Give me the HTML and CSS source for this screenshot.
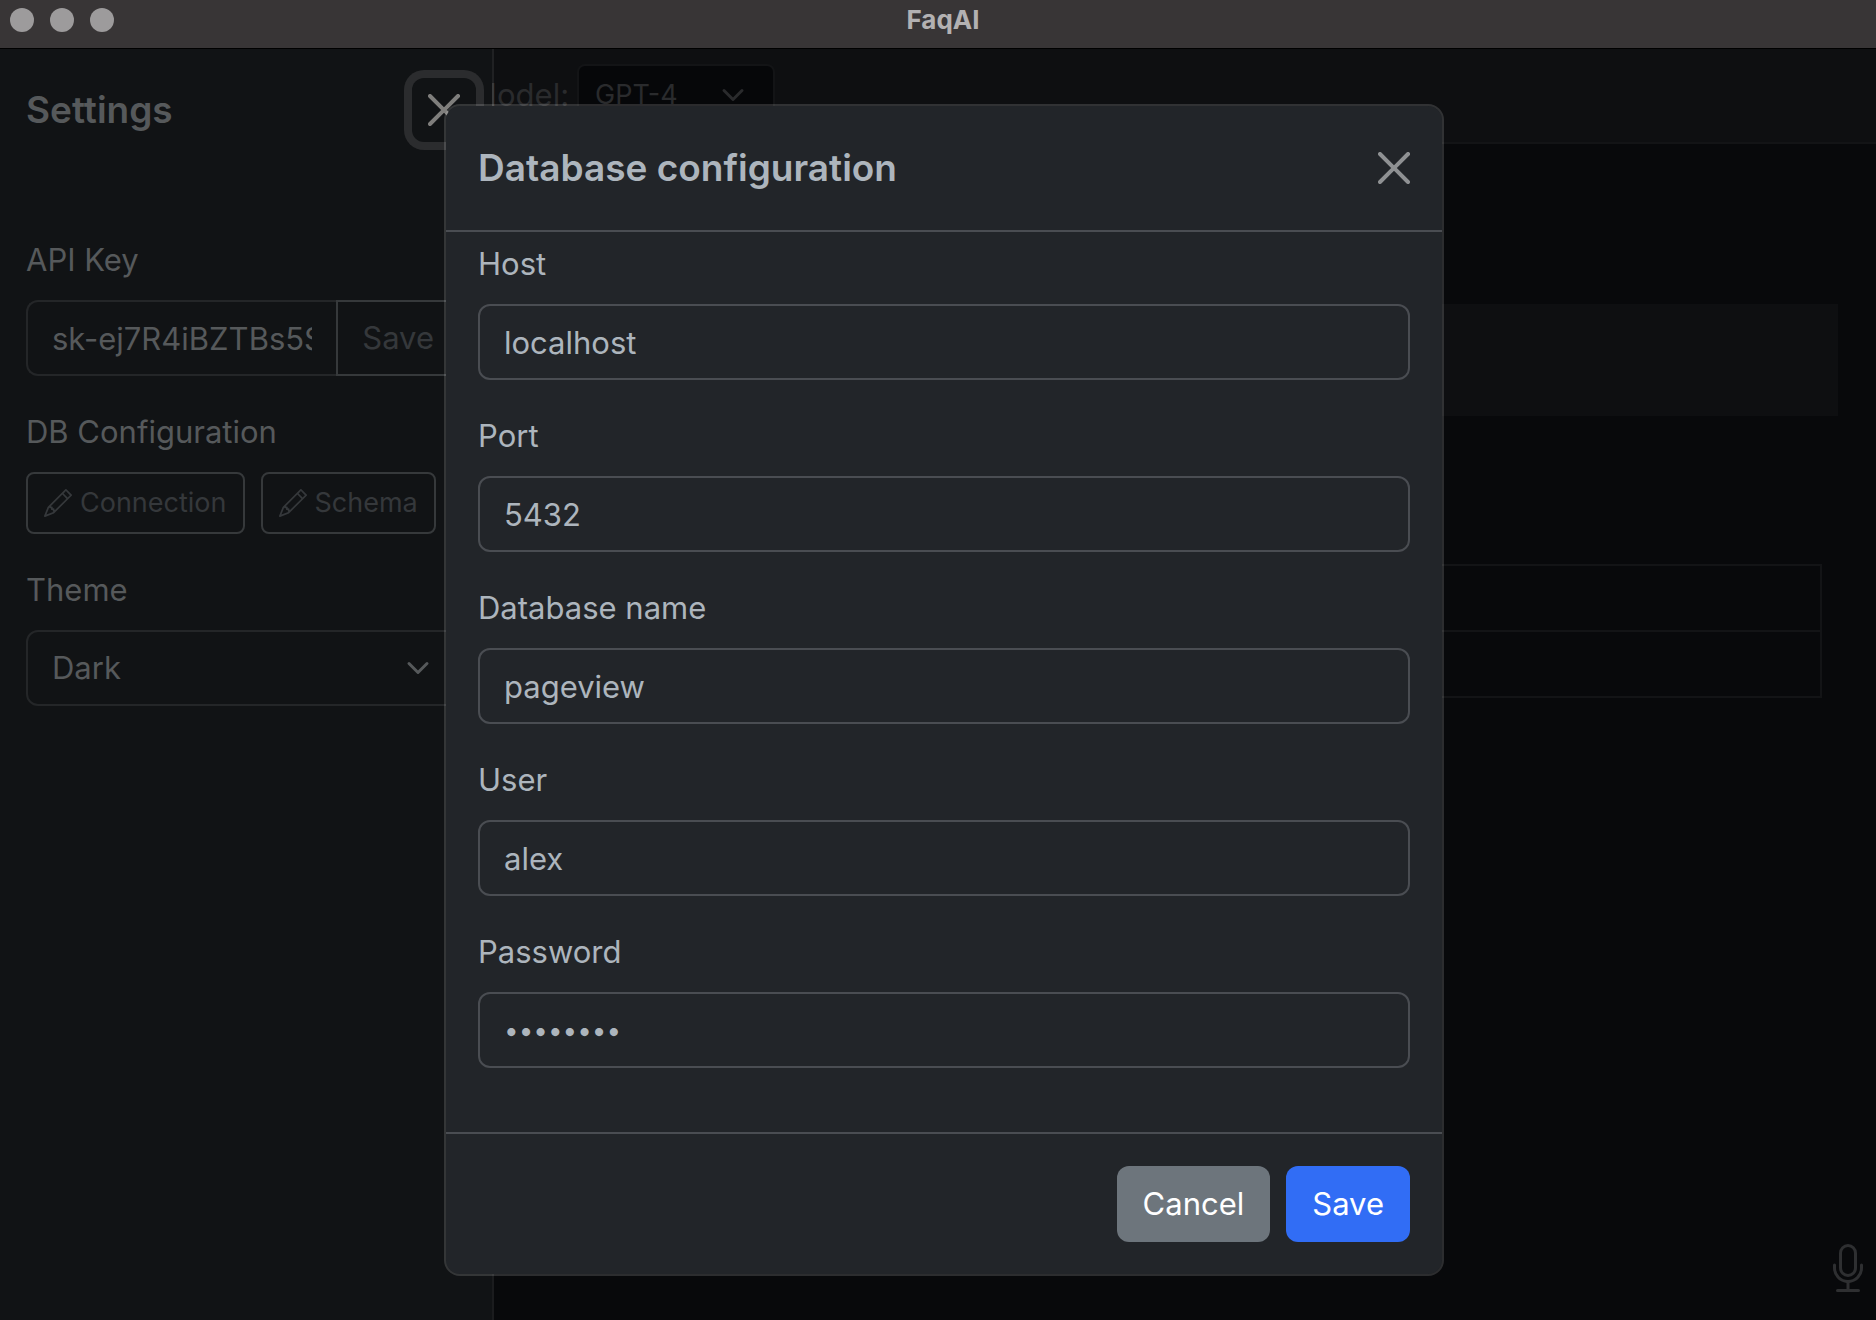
FILE: index.html
```html
<!DOCTYPE html>
<html lang="en">
<head>
<meta charset="utf-8">
<meta name="viewport" content="width=device-width, initial-scale=1">
<title>FaqAI</title>
<link rel="stylesheet" href="styles.css">
</head>
<body>
<header class="titlebar">
  <div class="lights"><span class="light"></span><span class="light"></span><span class="light"></span></div>
  <div class="app-name">FaqAI</div>
</header>

<div class="app">
  <main class="main">
    <nav class="navbar">
      <label class="model-label" for="model">Model:</label>
      <div class="select-wrap">
        <select class="select select-sm" id="model"><option>GPT-4</option></select>
        <svg class="chevron" viewBox="0 0 16 16"><path d="m2 5 6 6 6-6"/></svg>
      </div>
    </nav>
    <section class="chat">
      <div class="message"></div>
      <table class="results">
        <tbody><tr><td></td></tr><tr><td></td></tr></tbody>
      </table>
    </section>
    <button class="mic" type="button" aria-label="Record">
      <svg viewBox="0 0 16 16" width="48" height="48" fill="currentColor"><path d="M3.500 6.500A.5.5 0 0 1 4 7v1a4 4 0 0 0 8 0V7a.5.5 0 0 1 1 0v1a5 5 0 0 1-4.500 4.975V15h3a.5.5 0 0 1 0 1h-7a.5.5 0 0 1 0-1h3v-2.025A5 5 0 0 1 3 8V7a.5.5 0 0 1 .5-.5z"/><path d="M10 8a2 2 0 1 1-4 0V3a2 2 0 1 1 4 0v5zM8 0a3 3 0 0 0-3 3v5a3 3 0 0 0 6 0V3a3 3 0 0 0-3-3z"/></svg>
    </button>
  </main>

  <aside class="sidebar">
    <div class="sidebar-header">
      <h2 class="heading">Settings</h2>
      <button class="close close-focused" type="button" aria-label="Close settings">
        <svg viewBox="0 0 16 16" width="32" height="32" fill="currentColor"><path d="M.293.293a1 1 0 0 1 1.414 0L8 6.586 14.293.293a1 1 0 1 1 1.414 1.414L9.414 8l6.293 6.293a1 1 0 0 1-1.414 1.414L8 9.414l-6.293 6.293a1 1 0 0 1-1.414-1.414L6.586 8 .293 1.707a1 1 0 0 1 0-1.414z"/></svg>
      </button>
    </div>
    <div class="field">
      <label class="label" for="api-key">API Key</label>
      <div class="input-group">
        <input class="input" id="api-key" type="text" value="sk-ej7R4iBZTBs5S9">
        <button class="btn btn-outline" type="button">Save</button>
      </div>
    </div>
    <div class="field">
      <span class="label">DB Configuration</span>
      <div class="button-row">
        <button class="btn btn-outline btn-sm" type="button">
          <svg class="pencil" viewBox="0 0 16 16"><use href="#pencil"/></svg>Connection
        </button>
        <button class="btn btn-outline btn-sm" type="button">
          <svg class="pencil" viewBox="0 0 16 16"><use href="#pencil"/></svg>Schema
        </button>
      </div>
    </div>
    <div class="field">
      <label class="label" for="theme">Theme</label>
      <div class="select-wrap">
        <select class="select" id="theme"><option>Dark</option></select>
        <svg class="chevron" viewBox="0 0 16 16"><path d="m2 5 6 6 6-6"/></svg>
      </div>
    </div>
  </aside>
</div>

<div class="overlay">
  <form class="modal" role="dialog" aria-labelledby="modal-title">
    <div class="modal-header">
      <h1 class="heading" id="modal-title">Database configuration</h1>
      <button class="close" type="button" aria-label="Close">
        <svg viewBox="0 0 16 16" width="32" height="32" fill="currentColor"><path d="M.293.293a1 1 0 0 1 1.414 0L8 6.586 14.293.293a1 1 0 1 1 1.414 1.414L9.414 8l6.293 6.293a1 1 0 0 1-1.414 1.414L8 9.414l-6.293 6.293a1 1 0 0 1-1.414-1.414L6.586 8 .293 1.707a1 1 0 0 1 0-1.414z"/></svg>
      </button>
    </div>
    <div class="modal-body">
      <div class="field"><label class="label" for="host">Host</label><input class="input" id="host" type="text" value="localhost"></div>
      <div class="field"><label class="label" for="port">Port</label><input class="input" id="port" type="text" value="5432"></div>
      <div class="field"><label class="label" for="dbname">Database name</label><input class="input" id="dbname" type="text" value="pageview"></div>
      <div class="field"><label class="label" for="user">User</label><input class="input" id="user" type="text" value="alex"></div>
      <div class="field"><label class="label" for="password">Password</label><input class="input input-password" id="password" type="password" value="password"></div>
    </div>
    <div class="modal-footer">
      <button class="btn btn-secondary" type="button">Cancel</button>
      <button class="btn btn-primary" type="button">Save</button>
    </div>
  </form>
</div>

<svg width="0" height="0" class="symbols" aria-hidden="true">
  <symbol id="pencil" viewBox="0 0 16 16"><path d="M12.146.146a.5.5 0 0 1 .708 0l3 3a.5.5 0 0 1 0 .708l-10 10a.5.5 0 0 1-.168.110l-5 2a.5.5 0 0 1-.650-.650l2-5a.5.5 0 0 1 .110-.168l10-10zM11.207 2.500 13.500 4.793 14.793 3.500 12.500 1.207 11.207 2.500zm1.586 3L10.500 3.207 4 9.707V10h.5a.5.5 0 0 1 .5.5v.5h.5a.5.5 0 0 1 .5.5v.5h.293l6.500-6.500zm-9.761 5.175-.106.106-1.528 3.821 3.821-1.528.106-.106A.5.5 0 0 1 5 12.500V12h-.5a.5.5 0 0 1-.5-.5V11h-.5a.5.5 0 0 1-.468-.325z"/></symbol>
</svg>
</body>
</html>
```

FILE: styles.css
```css
* {
  box-sizing: border-box;
}

body {
  margin: 0;
  min-height: 100vh;
  display: flex;
  flex-direction: column;
  overflow: hidden;
  background: #08090b;
  color: #56595b;
  font-family: Inter, "Liberation Sans", sans-serif;
  font-size: 31px;
  line-height: 48px;
}

button,
input,
select {
  margin: 0;
  font: inherit;
  color: inherit;
}

.symbols {
  position: absolute;
}

/* Window title bar */
.titlebar {
  display: grid;
  grid-template-columns: 1fr auto 1fr;
  align-items: center;
  height: 49px;
  padding: 0 0 8px 10px;
  background: #383536;
  border-bottom: 1px solid #000;
}

.lights {
  display: flex;
  gap: 16px;
}

.light {
  width: 24px;
  height: 24px;
  border-radius: 50%;
  background: #9d9b9c;
}

.app-name {
  color: #b3b1b2;
  font-size: 26px;
  font-weight: 700;
  line-height: 32px;
}

/* Page behind the dialog */
.app {
  position: relative;
  flex: 1;
  display: flex;
}

.main {
  flex: 1;
  display: flex;
  flex-direction: column;
}

.navbar {
  display: flex;
  align-items: center;
  gap: 8px;
  height: 95px;
  padding: 0 0 2px 469px;
  background: #0e0f11;
  border-bottom: 2px solid #131416;
  color: #2a2b2d;
}

.model-label {
  width: 100px;
  text-align: right;
}

.chat {
  flex: 1;
  padding: 160px 38px 0;
}

.message {
  height: 112px;
  margin-bottom: 148px;
  background: #0e0f11;
}

.results {
  width: calc(100% - 16px);
  border-collapse: collapse;
}

.results td {
  height: 66px;
  border: 2px solid #131416;
}

.mic {
  align-self: flex-end;
  display: flex;
  margin: 0 4px 28px;
  padding: 0;
  border: 0;
  background: none;
  color: #2e2f31;
}

/* Settings panel */
.sidebar {
  position: absolute;
  inset: 0 auto 0 0;
  width: 494px;
  padding: 29px 32px 0 26px;
  background: #111315;
  background-clip: padding-box;
  border-right: 2px solid rgba(255, 255, 255, 0.08);
}

.sidebar-header {
  display: flex;
  align-items: center;
  justify-content: space-between;
  margin-bottom: 94px;
}

.sidebar .close {
  margin-right: -16px;
}

.heading {
  margin: 0;
  font-size: 37px;
  font-weight: 600;
  line-height: 60px;
}

.close {
  display: flex;
  padding: 16px;
  border: 0;
  border-radius: 12px;
  background: none;
  color: #8f9193;
}

.close-focused {
  color: #7f7e7c;
  box-shadow: 0 0 0 8px #2b2c2e;
}

/* Form controls */
.field {
  margin-bottom: 32px;
}

.label {
  display: block;
  margin-bottom: 16px;
}

.input,
.select {
  display: block;
  width: 100%;
  height: 76px;
  padding: 12px 24px;
  border: 2px solid #242628;
  border-radius: 12px;
  background: transparent;
  outline: 0;
}

.input-password {
  font-size: 26px;
}

.select {
  appearance: none;
}

.select-wrap {
  position: relative;
}

.chevron {
  position: absolute;
  top: 50%;
  right: 30px;
  width: 24px;
  height: 24px;
  margin-top: -12px;
  fill: none;
  stroke: currentColor;
  stroke-width: 2;
  stroke-linecap: round;
  stroke-linejoin: round;
  pointer-events: none;
}

.select-sm {
  width: 198px;
  height: 62px;
  padding: 0 16px;
  border-color: #131416;
  border-radius: 8px;
  background: #060709;
  font-size: 27px;
}

.input-group {
  display: flex;
}

.input-group .input {
  flex: 1;
  min-width: 0;
  border-right: 0;
  border-radius: 12px 0 0 12px;
}

.input-group .btn {
  border-radius: 0 12px 12px 0;
}

.button-row {
  display: flex;
  gap: 16px;
}

.btn {
  display: flex;
  align-items: center;
  height: 76px;
  padding: 0 24px;
  border: 2px solid transparent;
  border-radius: 12px;
}

.btn-outline {
  border-color: #36393b;
  background: none;
  color: #35383b;
}

.btn-sm {
  gap: 8px;
  height: 62px;
  padding: 0 16px;
  border-radius: 8px;
  font-size: 27px;
}

.pencil {
  width: 28px;
  height: 28px;
  fill: currentColor;
}

.btn-primary {
  background: #316df5;
  color: #fff;
}

.btn-secondary {
  background: #6d757c;
  color: #fff;
}

/* Dialog */
.overlay {
  position: absolute;
  inset: 0;
  display: flex;
  justify-content: center;
  align-items: flex-start;
  padding: 104px 0 0 12px;
}

.modal {
  width: 100%;
  max-width: 1000px;
  background: #222529;
  background-clip: padding-box;
  border: 2px solid rgba(255, 255, 255, 0.15);
  border-radius: 16px;
  color: #adb5bd;
}

.modal-header {
  display: flex;
  align-items: center;
  justify-content: space-between;
  padding: 30px 16px 30px 32px;
  border-bottom: 2px solid #4a4d52;
}

.modal-body {
  padding: 8px 32px 32px;
}

.modal .input {
  border-color: #4a4d52;
}

.modal-footer {
  display: flex;
  justify-content: flex-end;
  gap: 16px;
  padding: 32px;
  border-top: 2px solid #4a4d52;
}
```
